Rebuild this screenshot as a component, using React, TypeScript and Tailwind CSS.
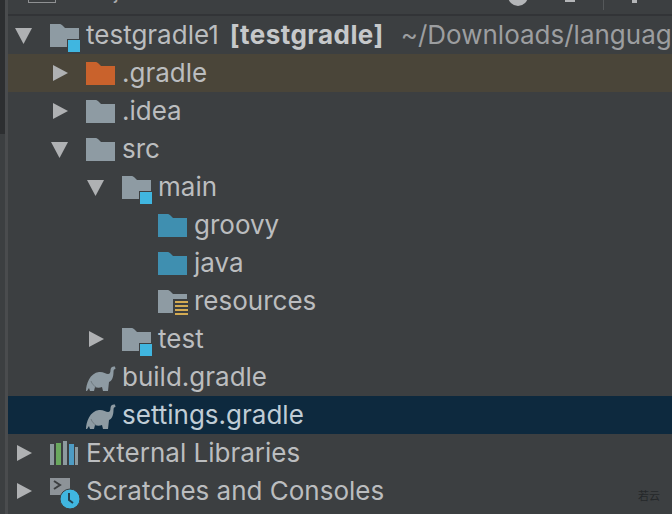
import type { ReactNode } from "react";

type Kind = "module" | "orange" | "gray" | "blue" | "res" | "gradle" | "libs" | "scratch";

interface Row {
  label: ReactNode;
  depth: number;
  kind: Kind;
  arrow?: "open" | "closed";
  tone?: "gradle" | "selected";
}

const ROWS: Row[] = [
  {
    label: (
      <>
        testgradle1
        <b className="ml-[11px] font-bold tracking-[0.45px] text-[#c6c8ca]">[testgradle]</b>
        <span className="ml-[17px] text-[#9c9ea0]">~/Downloads/language</span>
      </>
    ),
    depth: 0,
    kind: "module",
    arrow: "open",
  },
  { label: ".gradle", depth: 1, kind: "orange", arrow: "closed", tone: "gradle" },
  { label: ".idea", depth: 1, kind: "gray", arrow: "closed" },
  { label: "src", depth: 1, kind: "gray", arrow: "open" },
  { label: "main", depth: 2, kind: "module", arrow: "open" },
  { label: "groovy", depth: 3, kind: "blue" },
  { label: "java", depth: 3, kind: "blue" },
  { label: "resources", depth: 3, kind: "res" },
  { label: "test", depth: 2, kind: "module", arrow: "closed" },
  { label: "build.gradle", depth: 1, kind: "gradle" },
  { label: "settings.gradle", depth: 1, kind: "gradle", tone: "selected" },
  { label: "External Libraries", depth: 0, kind: "libs", arrow: "closed" },
  { label: "Scratches and Consoles", depth: 0, kind: "scratch", arrow: "closed" },
];

const FOLDER = "M0 5h10c1 0 2 1 3 2l2 2h14v19H0z";

function Arrow({ dir }: { dir: "open" | "closed" }) {
  return (
    <svg width="20" height="20" viewBox="0 0 20 20" className="block">
      {dir === "open" ? (
        <path d="M1 3h17l-8.5 16z" fill="#afb1b3" />
      ) : (
        <path d="M3 2l15 8-15 8z" fill="#afb1b3" />
      )}
    </svg>
  );
}

function Icon({ kind }: { kind: Kind }) {
  if (kind === "gradle") {
    return (
      <svg width="31" height="26" viewBox="0 0 31 26" className="mt-[3px] block">
        <path
          d="M0 25C0 18 4 7 13 6c4-.5 7 2 9 2s2.5-2 2.5-4c0-3 2.500-4 4.500-3.500l.5 2.500c-1.500 0-2 1-2 3 0 5-1.500 9-4.500 10l-1 9h-5l-1-4c-2 1-5 1-7 0l-1 4H4l-1-3-2 3z"
          fill="#8e9ba3"
        />
        <path d="M5 15c1 3 3 5 5 6" fill="none" stroke="#6f7a80" strokeWidth="1" />
      </svg>
    );
  }
  if (kind === "libs") {
    return (
      <svg width="28" height="24" viewBox="0 0 28 24" className="block">
        <rect x="0" y="3" width="4" height="21" fill="#8d9a9f" />
        <rect x="6" y="2" width="5" height="22" fill="#6aa85e" />
        <rect x="13" y="0" width="4" height="24" fill="#8d9a9f" />
        <rect x="19" y="3" width="5" height="21" fill="#4e9cc4" />
        <rect x="25" y="6" width="3" height="18" fill="#8d9a9f" />
      </svg>
    );
  }
  if (kind === "scratch") {
    return (
      <svg width="32" height="36" viewBox="0 0 32 36" className="block">
        <rect x="0" y="5" width="20" height="17" fill="#8d9398" />
        <path d="M4 8l6 4-6 4" fill="none" stroke="#3c3f41" strokeWidth="2" />
        <circle cx="20" cy="26" r="10" fill="#40b6e0" stroke="#3c3f41" strokeWidth="1" />
        <path d="M19 20v7l4 3" fill="none" stroke="#23404f" strokeWidth="2" />
      </svg>
    );
  }
  const fill = kind === "orange" ? "#c9622c" : kind === "blue" ? "#3f8fb0" : "#8e9ba3";
  return (
    <svg width="36" height="32" viewBox="0 0 36 32" className="block overflow-visible">
      <path d={FOLDER} fill={fill} />
      {kind === "module" && <rect x="17.500" y="20.500" width="13" height="13" fill="#40b6e0" stroke="#3c3f41" strokeWidth="1" />}
      {kind === "res" && (
        <>
          <rect x="15" y="14" width="17" height="18" fill="#3c3f41" />
          <path d="M17 17h13M17 21h13M17 25h13M17 29h13" stroke="#d3ab53" strokeWidth="2" />
        </>
      )}
    </svg>
  );
}

function TreeRow({ row }: { row: Row }) {
  const indent = row.depth * 36;
  return (
    <div
      className={
        "relative flex h-[38px] items-center " +
        (row.tone === "gradle" ? "bg-[#4a4539] " : row.tone === "selected" ? "bg-[#0d293e] " : "")
      }
    >
      <div className="flex items-center" style={{ marginLeft: indent + 6 }}>
        <div className="w-[36px] shrink-0">{row.arrow && <Arrow dir={row.arrow} />}</div>
        <div className="flex h-[32px] w-[36px] shrink-0 items-center">
          <Icon kind={row.kind} />
        </div>
        <span
          className={
            "whitespace-nowrap text-[26px] leading-[38px] " +
            (row.tone === "selected" ? "text-[#c0cdd6]" : "text-[#bbbdbf]")
          }
        >
          {row.label}
        </span>
      </div>
    </div>
  );
}

// toolbar above the tree: only the bottom few pixels of it are in the picture
function Toolbar() {
  return (
    <div className="flex h-[16px] items-start overflow-hidden border-b-2 border-[#323437]">
      <div className="ml-[20px] h-[3px] w-[28px] border-x border-b border-[#8f9193]" />
      <span className="ml-[26px] -mt-[20px] whitespace-nowrap text-[20px] leading-[24px] text-[#a9abad]">Project</span>
      <div className="ml-[360px] -mt-[14px] size-[20px] shrink-0 rounded-full bg-[#b4b6b8]" />
      <div className="ml-[37px] h-[2px] w-[10px] shrink-0 bg-[#b4b6b8]" />
      <div className="ml-[28px] h-[10px] w-px shrink-0 bg-[#55585a]" />
      <div className="ml-[28px] h-[3px] w-[5px] shrink-0 bg-[#b4b6b8]" />
    </div>
  );
}

export default function App() {
  return (
    <div className="relative flex h-[514px] w-[672px] overflow-hidden bg-[#3c3f41] font-['Inter','Noto_Sans_CJK_SC',sans-serif]">
      <div className="h-full w-[8px] shrink-0 border-r-[3px] border-[#4a4c4e]">
        <div className="h-[134px] bg-[#2d2f31]" />
      </div>
      <div className="min-w-0 flex-1 overflow-hidden">
        <Toolbar />
        {ROWS.map((row, i) => (
          <TreeRow key={i} row={row} />
        ))}
      </div>
      <span className="absolute bottom-[10px] right-[12px] text-[11px] text-[#25282a]">若云</span>
    </div>
  );
}
